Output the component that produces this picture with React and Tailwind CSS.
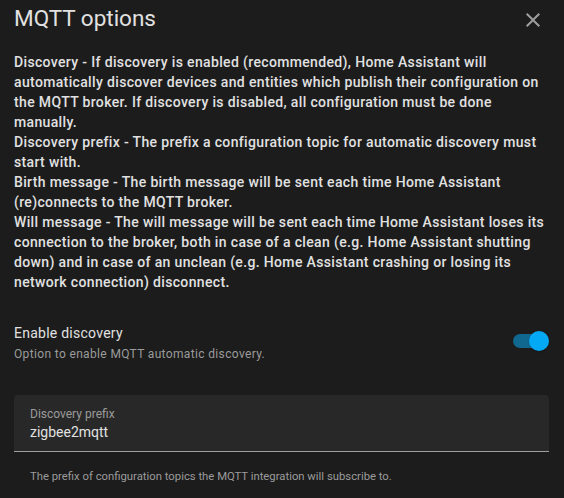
import React, { useState } from "react";

const font = { fontFamily: "Roboto, 'Noto Sans', sans-serif" };

// Close icon (mdi close)
const CloseIcon = () => (
  <svg viewBox="0 0 24 24" className="h-6 w-6" fill="#9e9e9e">
    <path d="M19,6.41L17.59,5L12,10.59L6.41,5L5,6.41L10.59,12L5,17.59L6.41,19L12,13.41L17.59,19L19,17.59L13.41,12L19,6.41Z" />
  </svg>
);

const Toggle = ({ on, onChange }) => (
  <button
    type="button"
    onClick={() => onChange(!on)}
    className="relative h-5 w-9 shrink-0"
  >
    <span
      className={
        on
          ? "absolute left-0 top-[3px] h-[14px] w-[35px] rounded-full bg-[#10678f]"
          : "absolute left-0 top-[3px] h-[14px] w-[35px] rounded-full bg-[#5a5a5a]"
      }
    />
    <span
      className={
        on
          ? "absolute left-[16px] top-0 h-5 w-5 rounded-full bg-[#03a9f4] shadow"
          : "absolute left-0 top-0 h-5 w-5 rounded-full bg-[#bdbdbd] shadow"
      }
    />
  </button>
);

export default function App() {
  const [discovery, setDiscovery] = useState(true);
  const [prefix, setPrefix] = useState("zigbee2mqtt");

  return (
    <div
      className="min-h-[498px] w-full bg-[#1c1c1c] text-[#e1e1e1]"
      style={font}
    >
      <div className="flex items-start justify-between pl-[14px] pr-[19px] pt-[2px]">
        <h2 className="text-[22.5px] leading-8 font-normal text-[#e1e1e1]">
          MQTT options
        </h2>
        <button type="button" className="mt-[6px]">
          <CloseIcon />
        </button>
      </div>

      <div className="px-[14px] pt-[18px]">
        <p className="text-[14px] leading-5 font-medium tracking-[0.35px] text-[#e1e1e1]">
          Discovery - If discovery is enabled (recommended), Home Assistant will
          automatically discover devices and entities which publish their
          configuration on the MQTT broker. If discovery is disabled, all
          configuration must be done manually.
          <br />
          Discovery prefix - The prefix a configuration topic for automatic
          discovery must start with.
          <br />
          Birth message - The birth message will be sent each time Home
          Assistant (re)connects to the MQTT broker.
          <br />
          Will message - The will message will be sent each time Home
          Assistant loses its connection to the broker, both in case of a clean
          (e.g. Home Assistant shutting down) and in case of an unclean (e.g.
          Home Assistant crashing or losing its network connection) disconnect.
        </p>

        <div className="mt-[31px] flex items-center justify-between pr-[1px]">
          <div>
            <div className="text-[14px] leading-5 tracking-[0.25px] text-[#e1e1e1]">
              Enable discovery
            </div>
            <div className="mt-[3px] text-[12px] leading-4 tracking-[0.35px] text-[#9b9b9b]">
              Option to enable MQTT automatic discovery.
            </div>
          </div>
          <div className="mt-[3px]">
            <Toggle on={discovery} onChange={setDiscovery} />
          </div>
        </div>

        <div className="mt-[33px] mr-[1px] rounded-t-[4px] border-b border-[#9e9e9e] bg-[#282828] px-4 pt-[11px] pb-[9px]">
          <label className="block text-[12px] leading-4 text-[#9b9b9b]">
            Discovery prefix
          </label>
          <input
            value={prefix}
            onChange={(e) => setPrefix(e.target.value)}
            className="block w-full bg-transparent text-[14px] leading-5 text-[#e1e1e1] outline-none"
            style={font}
          />
        </div>
        <div className="px-4 pt-[17px] text-[11.3px] leading-4 text-[#9b9b9b]">
          The prefix of configuration topics the MQTT integration will subscribe
          to.
        </div>
      </div>
    </div>
  );
}
